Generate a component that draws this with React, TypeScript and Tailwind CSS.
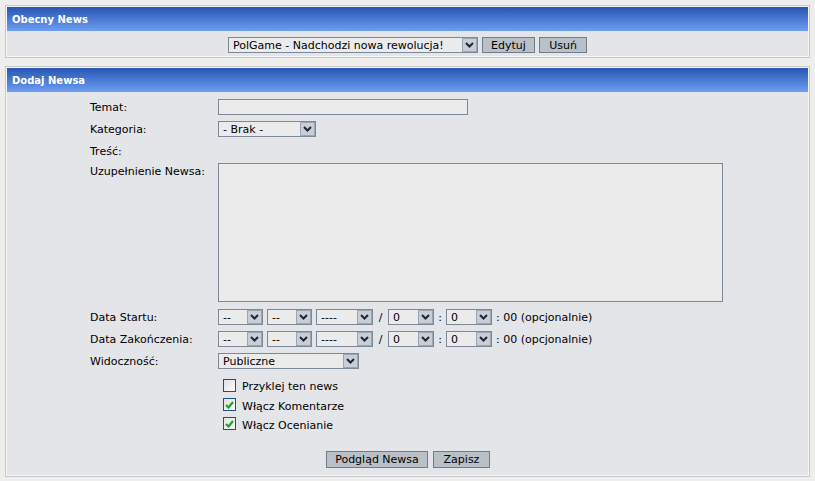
import React from 'react';

function Arrow() {
  return (
    <span className="flex h-[14px] w-[15px] shrink-0 items-center justify-center border border-[#9aa6b4] bg-[#c9ced6]">
      <svg width="9" height="6" viewBox="0 0 9 6">
        <path d="M1 1 L4.5 4.5 L8 1" fill="none" stroke="#1d2733" strokeWidth="2" />
      </svg>
    </span>
  );
}

function Select({ w, text }: { w: string; text: string }) {
  return (
    <div className={`flex h-[16px] ${w} shrink-0 items-center justify-between border border-[#7b8898] bg-[#ebebeb] pl-[4px]`}>
      <span className="truncate text-[11px] leading-none text-black">{text}</span>
      <Arrow />
    </div>
  );
}

function Button({ children, w }: { children: React.ReactNode; w: string }) {
  return (
    <button className={`flex h-[16px] ${w} items-center justify-center border border-[#707c8a] bg-[#bac0c8] text-[11px] leading-none text-black`}>
      {children}
    </button>
  );
}

function Check({ checked }: { checked?: boolean }) {
  return (
    <span className="flex h-[13px] w-[13px] items-center justify-center border border-[#1e4f7e] bg-linear-to-br from-[#e2e2e2] to-[#fbfbfb]">
      {checked && (
        <svg width="9" height="8" viewBox="0 0 9 8">
          <path d="M1 4 L3.5 6.5 L8 1" fill="none" stroke="#22a22a" strokeWidth="2.2" />
        </svg>
      )}
    </span>
  );
}

function Panel({ title, children }: { title: string; children: React.ReactNode }) {
  return (
    <div className="border border-[#c6c8cb] bg-[#f6f6f6] p-[1px]">
      <div className="flex h-[24px] items-center bg-linear-to-b from-[#2756b3] to-[#6d9ef1] pl-[5px] text-[10px] font-bold text-white">
        {title}
      </div>
      <div className="bg-[#e4e5e8]">{children}</div>
    </div>
  );
}

function Row({ label, children, h = 'h-[16px]', mb = 'mb-[6px]' }: { label: string; children?: React.ReactNode; h?: string; mb?: string }) {
  return (
    <div className={`flex ${mb}`}>
      <div className={`flex ${h} w-[128px] shrink-0 items-center text-[11px] leading-none`}>{label}</div>
      {children}
    </div>
  );
}

function DateRow() {
  return (
    <div className="flex items-center text-[11px] leading-none">
      <Select w="w-[45px]" text="--" />
      <div className="w-[4px]" />
      <Select w="w-[45px]" text="--" />
      <div className="w-[4px]" />
      <Select w="w-[57px]" text="----" />
      <span className="w-[15px] text-center">/</span>
      <Select w="w-[46px]" text="0" />
      <span className="w-[12px] text-center">:</span>
      <Select w="w-[46px]" text="0" />
      <span className="pl-[4px]">: 00 (opcjonalnie)</span>
    </div>
  );
}

export default function App() {
  return (
    <div className="min-h-[481px] bg-[#eeeeec] p-[5px] font-['DejaVu_Sans',sans-serif] text-black">
      <Panel title="Obecny News">
        <div className="flex justify-center gap-[4px] pb-[3px] pt-[6px]">
          <Select w="w-[250px]" text="PolGame - Nadchodzi nowa rewolucja!" />
          <Button w="w-[53px]">Edytuj</Button>
          <Button w="w-[48px]">Usuń</Button>
        </div>
      </Panel>

      <div className="mt-[8px]">
        <Panel title="Dodaj Newsa">
          <div className="pb-[7px] pl-[83px] pt-[7px]">
            <Row label="Temat:">
              <div className="h-[16px] w-[250px] border border-[#7b8898] bg-[#ebebeb]" />
            </Row>
            <Row label="Kategoria:">
              <Select w="w-[98px]" text="- Brak -" />
            </Row>
            <Row label="Treść:" mb="mb-[4px]" />
            <div className="mb-[7px] flex">
              <div className="flex h-[14px] w-[128px] shrink-0 items-end text-[11px] leading-none">Uzupełnienie Newsa:</div>
              <div className="h-[139px] w-[505px] border border-[#7b8898] bg-[#ebebeb]" />
            </div>
            <Row label="Data Startu:">
              <DateRow />
            </Row>
            <Row label="Data Zakończenia:">
              <DateRow />
            </Row>
            <Row label="Widoczność:" mb="mb-[6px]">
              <Select w="w-[141px]" text="Publiczne" />
            </Row>
            <div className="ml-[133px] flex flex-col text-[11px]">
              <div className="flex h-[20px] items-center gap-[6px]">
                <Check />
                <span className="pt-[5px]">Przyklej ten news</span>
              </div>
              <div className="flex h-[19px] items-center gap-[6px]">
                <Check checked />
                <span className="pt-[5px]">Włącz Komentarze</span>
              </div>
              <div className="flex h-[19px] items-center gap-[6px]">
                <Check checked />
                <span className="pt-[5px]">Włącz Ocenianie</span>
              </div>
            </div>
            <div className="ml-[236px] mt-[18px] flex gap-[5px]">
              <Button w="w-[102px] h-[17px]">Podgląd Newsa</Button>
              <Button w="w-[57px] h-[17px]">Zapisz</Button>
            </div>
          </div>
        </Panel>
      </div>
    </div>
  );
}
